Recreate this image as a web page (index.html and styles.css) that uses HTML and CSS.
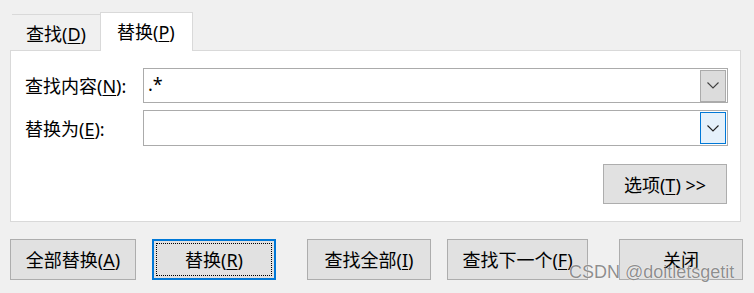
FILE: index.html
```html
<!DOCTYPE html>
<html lang="zh-CN">
<head>
<meta charset="utf-8">
<title>查找和替换</title>
<link rel="stylesheet" href="styles.css">
</head>
<body>
<div class="dialog">
  <div class="tabs">
    <div class="tab">查找(<u>D</u>)</div>
    <div class="tab active">替换(<u>P</u>)</div>
  </div>
  <div class="panel">
    <div class="row">
      <span class="label">查找内容(<u>N</u>):</span>
      <div class="combo">
        <span class="value">.*</span>
        <span class="drop">
          <svg width="12" height="7" viewBox="0 0 12 7"><path d="M0.5 0.5 L6 6 L11.5 0.5" fill="none" stroke="#404040" stroke-width="1.1"/></svg>
        </span>
      </div>
    </div>
    <div class="row row2">
      <span class="label">替换为(<u>E</u>):</span>
      <div class="combo">
        <span class="value"></span>
        <span class="drop hot">
          <svg width="12" height="7" viewBox="0 0 12 7"><path d="M0.5 0.5 L6 6 L11.5 0.5" fill="none" stroke="#202020" stroke-width="1.1"/></svg>
        </span>
      </div>
    </div>
    <div class="opts-row">
      <button class="btn opts">选项(<u>T</u>) &gt;&gt;</button>
    </div>
  </div>
  <div class="actions">
    <button class="btn b-all">全部替换(<u>A</u>)</button>
    <button class="btn b-rep focus">替换(<u>R</u>)</button>
    <button class="btn b-findall">查找全部(<u>I</u>)</button>
    <button class="btn b-next">查找下一个(<u>F</u>)</button>
    <button class="btn b-close">关闭</button>
  </div>
  <div class="watermark">CSDN @doitletsgetit</div>
</div>
</body>
</html>
```

FILE: styles.css
```css
html, body {
  margin: 0;
  padding: 0;
  background: #f0f0f0;
}
body {
  width: 754px;
  height: 293px;
  overflow: hidden;
  font-family: "Noto Sans", "Noto Sans CJK SC", sans-serif;
  font-size: 18px;
  color: #000;
}
.dialog {
  position: relative;
  padding: 12px 0 0 10px;
}
u {
  text-decoration: underline;
  text-underline-offset: 2px;
  text-decoration-thickness: 1px;
}
.tabs {
  display: flex;
  align-items: flex-end;
  height: 38px;
  margin-left: 2px;
}
.tab {
  box-sizing: border-box;
  width: 88px;
  height: 36px;
  border-top: 1px solid #d9d9d9;
  display: flex;
  align-items: center;
  padding-left: 14px;
  padding-top: 2px;
  line-height: 1;
}
.tab.active {
  width: 93px;
  height: 39px;
  background: #fff;
  border: 1px solid #d9d9d9;
  border-bottom: none;
  margin-bottom: -1px;
  position: relative;
  z-index: 1;
  padding-left: 16px;
  padding-top: 0;
  padding-bottom: 0;
}
.panel {
  box-sizing: border-box;
  width: 731px;
  height: 172px;
  background: #fff;
  border: 1px solid #d9d9d9;
  padding: 17px 12px 0 14px;
  display: flex;
  flex-direction: column;
}
.row {
  display: flex;
  align-items: center;
  height: 35px;
}
.row2 {
  margin-top: 7px;
  height: 36px;
}
.label {
  width: 118px;
  flex: none;
  line-height: 1;
  padding-top: 1px;
  white-space: nowrap;
}
.combo {
  box-sizing: border-box;
  width: 586px;
  height: 100%;
  border: 1px solid #ababab;
  display: flex;
  align-items: center;
  justify-content: space-between;
  padding: 1px 1px 1px 4px;
}
.value {
  line-height: 1;
  padding-bottom: 3px;
}
.drop {
  box-sizing: border-box;
  width: 26px;
  height: 32px;
  background: #dcdcdc;
  border: 1px solid #ababab;
  display: flex;
  align-items: center;
  justify-content: center;
}
.drop.hot {
  background: #e5f1fb;
  border-color: #0078d7;
}
.opts-row {
  display: flex;
  justify-content: flex-end;
  margin-top: 18px;
  padding-right: 1px;
}
.btn {
  box-sizing: border-box;
  height: 41px;
  background: #e1e1e1;
  border: 1px solid #adadad;
  font-family: inherit;
  font-size: 18px;
  color: #000;
  padding: 1px 0 0;
  margin: 0;
  line-height: 1;
  display: flex;
  align-items: center;
  justify-content: center;
  white-space: nowrap;
}
.opts {
  width: 124px;
  height: 40px;
}
.actions {
  display: flex;
  margin-top: 17px;
}
.b-all { width: 126px; }
.b-rep { width: 124px; margin-left: 16px; }
.b-findall { width: 124px; margin-left: 31px; }
.b-next { width: 141px; margin-left: 16px; }
.b-close { width: 124px; margin-left: 31px; }
.btn.focus {
  border: 2px solid #0078d7;
  outline: 1px dotted #000;
  outline-offset: -5px;
}
.watermark {
  position: absolute;
  left: 569px;
  top: 262px;
  font-family: "Liberation Sans", Arial, sans-serif;
  font-size: 18px;
  color: #8e8e8e;
  text-shadow: 0 0 1px #fff, 0 0 1px #fff;
  white-space: nowrap;
}
```
